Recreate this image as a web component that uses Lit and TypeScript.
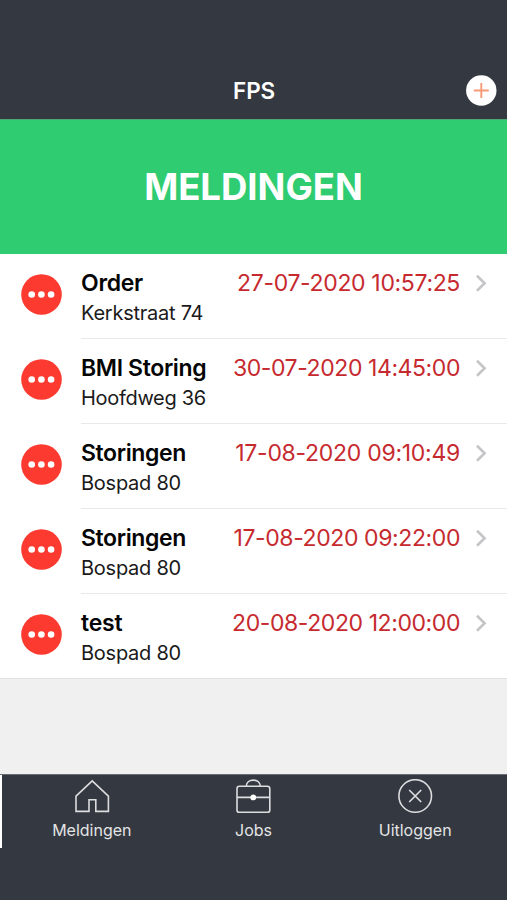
import { LitElement, html, css, svg } from "lit";
import { customElement } from "lit/decorators.js";

interface Melding {
  title: string;
  address: string;
  date: string;
  titleSpacing: number;
  addressSpacing: number;
  dateSpacing: number;
}

const meldingen: Melding[] = [
  { title: "Order", address: "Kerkstraat 74", date: "27-07-2020 10:57:25", titleSpacing: -0.3, addressSpacing: -0.25, dateSpacing: -0.34 },
  { title: "BMI Storing", address: "Hoofdweg 36", date: "30-07-2020 14:45:00", titleSpacing: -0.36, addressSpacing: -0.3, dateSpacing: -0.42 },
  { title: "Storingen", address: "Bospad 80", date: "17-08-2020 09:10:49", titleSpacing: -0.38, addressSpacing: -0.25, dateSpacing: -0.28 },
  { title: "Storingen", address: "Bospad 80", date: "17-08-2020 09:22:00", titleSpacing: -0.38, addressSpacing: -0.25, dateSpacing: -0.4 },
  { title: "test", address: "Bospad 80", date: "20-08-2020 12:00:00", titleSpacing: -0.25, addressSpacing: -0.25, dateSpacing: -0.42 },
];

const tabs = [
  {
    label: "Meldingen",
    icon: svg`<path d="M3 17.2 L19.2 1.8 L35.4 17.2 V32.4 H22.8 V20.8 H16 V32.4 H3 Z" />`,
  },
  {
    label: "Jobs",
    icon: svg`<rect x="3" y="7.3" width="32.8" height="26" rx="2.4" /><path d="M3 18.4 H35.8 M12.2 7.3 C12.6 -1 26 -1 26.4 7.3" /><circle cx="19.3" cy="18.4" r="2.9" fill="#fff" stroke="none" />`,
  },
  {
    label: "Uitloggen",
    icon: svg`<circle cx="19.2" cy="17" r="16.3" /><path d="M13.2 11 L25.2 23 M25.2 11 L13.2 23" stroke-width="1.7" />`,
  },
];

@customElement("app-root")
export class AppRoot extends LitElement {
  static styles = css`
    :host {
      display: flex;
      flex-direction: column;
      box-sizing: border-box;
      width: 100%;
      height: 900px;
      overflow: hidden;
      background: #f0f0f0;
      font-family: Inter, "Liberation Sans", sans-serif;
    }
    svg { display: block; }
    .header {
      box-sizing: border-box;
      height: 119px;
      padding: 62px 10px 0 11px;
      background: #343840;
      display: grid;
      grid-template-columns: 31px 1fr 31px;
      align-items: center;
      color: #fff;
    }
    .name {
      grid-column: 2;
      text-align: center;
      font-size: 22.5px;
      font-weight: 600;
      line-height: 28px;
      letter-spacing: -0.2px;
    }
    .banner {
      height: 135px;
      background: #2fcc71;
      border-top: 1px solid #4da873;
      box-sizing: border-box;
      display: flex;
      align-items: center;
      justify-content: center;
      color: #fff;
      font-size: 36.5px;
      font-weight: 700;
    }
    .list { background: #fff; border-bottom: 1px solid #e2e2e2; }
    .row { display: flex; height: 85px; }
    .row:last-child { height: 84px; }
    .dots { margin: 20px 19px 0 21px; flex: none; }
    .body {
      flex: 1;
      display: flex;
      box-sizing: border-box;
      padding: 14px 20px 0 0;
      border-bottom: 1px solid #e9e9e9;
    }
    .row:last-child .body { border-bottom: none; }
    .text { flex: 1; white-space: nowrap; }
    .title { font-size: 23px; line-height: 30px; font-weight: 600; color: #050505; }
    .address { font-size: 20px; line-height: 31px; color: #1a1a1a; }
    .date { font-size: 23px; line-height: 30px; color: #c62a2f; white-space: nowrap; }
    .chevron { margin: 6px 0 0 15px; flex: none; }
    .tabs {
      margin-top: auto;
      height: 126px;
      box-sizing: border-box;
      border-top: 1px solid #686c70;
      background: linear-gradient(#fff, #fff) 0 0 / 2px 73px no-repeat, #343840;
      padding: 0 11px;
      display: grid;
      grid-template-columns: repeat(3, 1fr);
    }
    .tab {
      display: flex;
      flex-direction: column;
      align-items: center;
      padding-top: 4px;
      color: #e3e4e5;
      font-size: 16px;
      line-height: 20px;
    }
    .tab svg { margin-bottom: 5px; }
  `;

  private row(m: Melding) {
    return html`<div class="row">
      <svg class="dots" width="41" height="41" viewBox="0 0 41 41">
        <circle cx="20.5" cy="20.5" r="20.3" fill="#fd3a30" />
        <g fill="#fff">
          <circle cx="10.7" cy="20.5" r="3.3" />
          <circle cx="20.4" cy="20.5" r="3.3" />
          <circle cx="30.1" cy="20.5" r="3.3" />
        </g>
      </svg>
      <div class="body">
        <div class="text">
          <div class="title"><span style="letter-spacing:${m.titleSpacing}px">${m.title}</span></div>
          <div class="address"><span style="letter-spacing:${m.addressSpacing}px">${m.address}</span></div>
        </div>
        <div class="date"><span style="letter-spacing:${m.dateSpacing}px">${m.date}</span></div>
        <svg class="chevron" width="12" height="18" viewBox="0 0 12 18">
          <path d="M2 1.8 L9.6 9.3 L2 16.8" fill="none" stroke="#c5c5c8" stroke-width="2.6" />
        </svg>
      </div>
    </div>`;
  }

  render() {
    return html`
      <div class="header">
        <div class="name">FPS</div>
        <svg width="31" height="31" viewBox="0 0 31 31">
          <circle cx="15.3" cy="15.5" r="15.2" fill="#fff" />
          <path d="M15.3 8 V23 M7.8 15.5 H22.8" stroke="#f79a78" stroke-width="1.9" />
        </svg>
      </div>
      <div class="banner"><span>MELDINGEN</span></div>
      <div class="list">${meldingen.map((m) => this.row(m))}</div>
      <div class="tabs">
        ${tabs.map(
          (t) => html`<div class="tab">
            <svg width="38" height="36" viewBox="0 0 38 36" fill="none" stroke="#dcdddf" stroke-width="1.6">${t.icon}</svg>
            <span>${t.label}</span>
          </div>`
        )}
      </div>
    `;
  }
}
